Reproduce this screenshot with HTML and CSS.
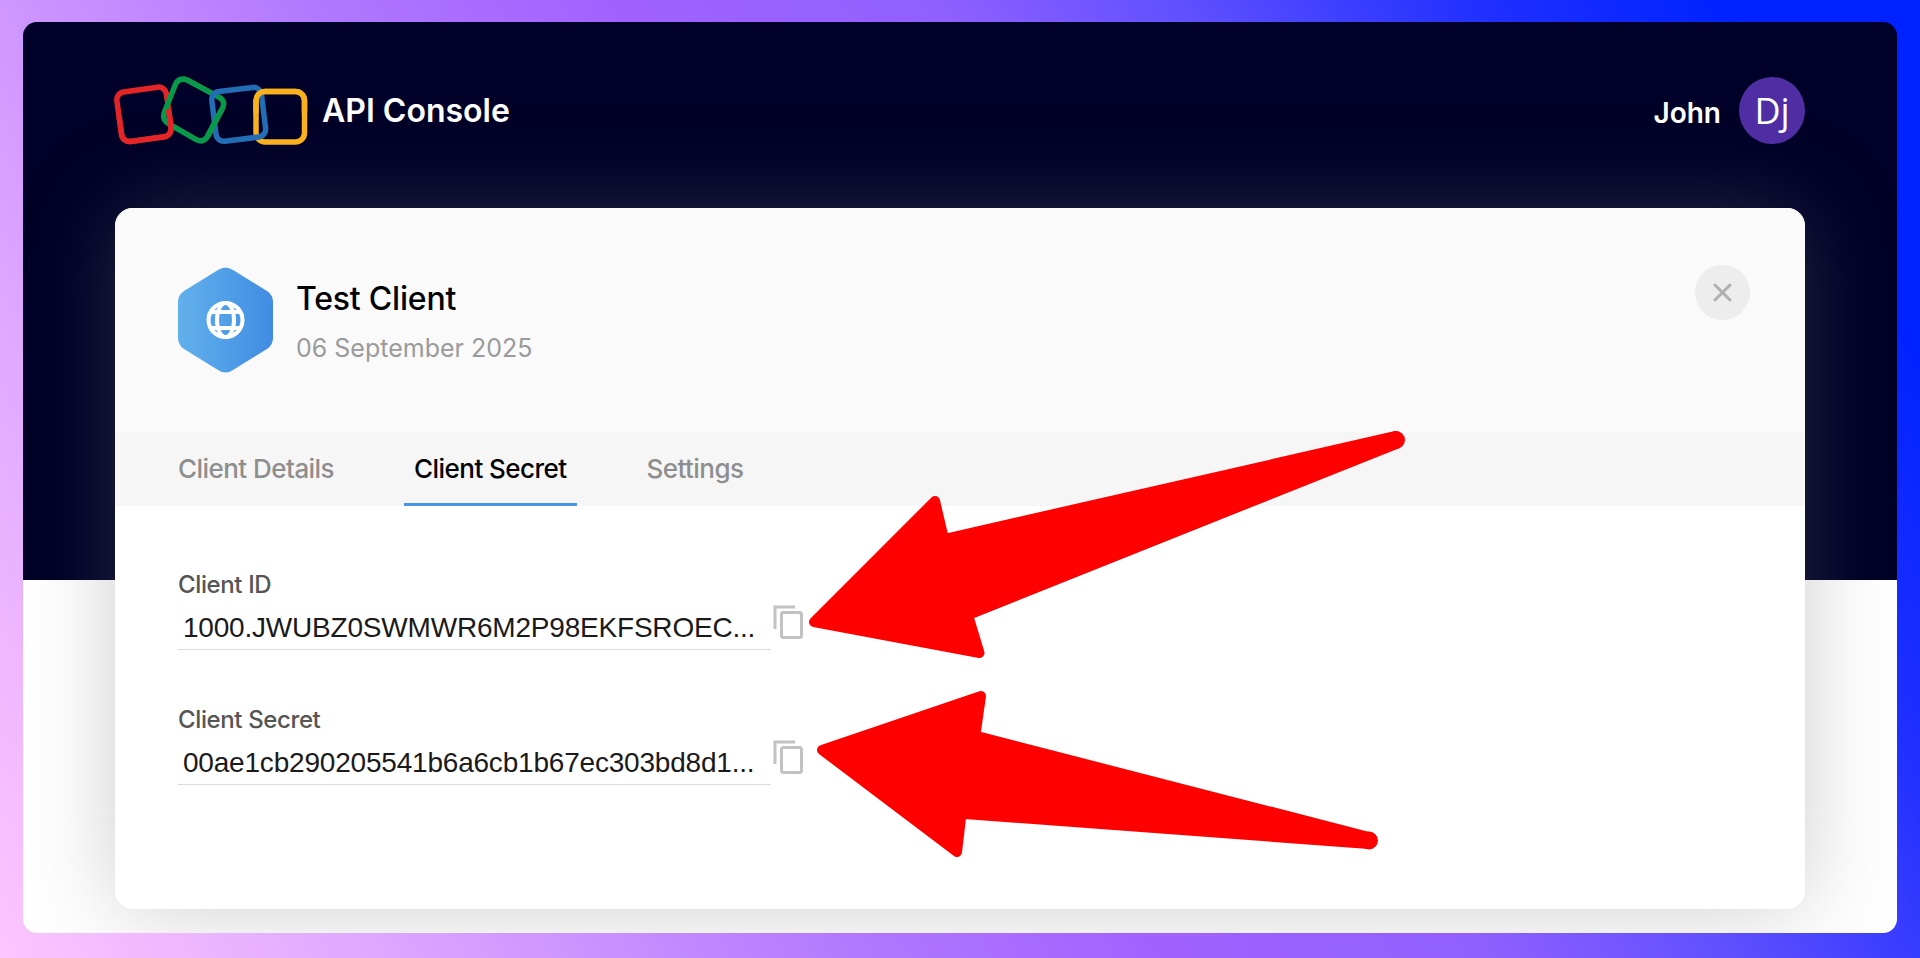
FILE: index.html
```html
<!DOCTYPE html>
<html lang="en">
<head>
  <meta charset="UTF-8" />
  <title>API Console</title>
  <link rel="stylesheet" href="styles.css">
</head>
<body>
  <div class="window">
    <header class="topbar">
      <div class="brand">
        <svg class="brand-logo" width="194" height="70" viewBox="0 0 194 70" fill="none" stroke-width="5.5">
          <defs>
            <clipPath id="lowerPart"><rect x="0" y="36" width="194" height="34"/></clipPath>
            <clipPath id="topPart"><rect x="0" y="0" width="194" height="36"/></clipPath>
          </defs>
          <!-- the four squares are interlocked, so parts get drawn twice -->
          <rect x="5" y="12.3" width="50" height="50" rx="8" stroke="#e42527" transform="rotate(-8 30 37.3)"/>
          <path d="M73.3 3 L104.6 20 Q112.4 24 108.2 31.7 L93.8 58.9 Q89.5 66.5 81.9 62.3 L55.2 47.2 Q47.6 43 50.6 34.8 L61.2 8 Q64.4 -0.2 73.3 3Z" stroke="#089949"/>
          <rect x="5" y="12.3" width="50" height="50" rx="8" stroke="#e42527" transform="rotate(-8 30 37.3)" clip-path="url(#lowerPart)"/>
          <rect x="142" y="14.5" width="48.5" height="50.5" rx="9" stroke="#f9b21d"/>
          <rect x="99.7" y="12.3" width="50" height="50" rx="8" stroke="#226db4" transform="rotate(-7 124.7 37.3)"/>
          <path d="M108.2 31.7 L93.8 58.9" stroke="#089949"/>
          <rect x="142" y="14.5" width="48.5" height="50.5" rx="9" stroke="#f9b21d" clip-path="url(#topPart)"/>
        </svg>
        <span class="brand-name">API Console</span>
      </div>
      <div class="user">
        <span class="user-name">John</span>
        <span class="avatar">Dj</span>
      </div>
    </header>

    <main class="card">
      <div class="card-head">
        <div class="client">
          <svg class="client-icon" width="95" height="108" viewBox="0 0 95 108">
            <defs>
              <linearGradient id="hexFill" x1="0" y1="0" x2="1" y2="0">
                <stop offset="0" stop-color="#62b1ec"/>
                <stop offset="1" stop-color="#3f8ce2"/>
              </linearGradient>
            </defs>
            <path d="M40 4 Q47.5 -1 55 4 L89 25 Q95 29 95 36 L95 72 Q95 79 89 83 L55 104 Q47.5 109 40 104 L6 83 Q0 79 0 72 L0 36 Q0 29 6 25 Z" fill="url(#hexFill)"/>
            <g fill="none" stroke="#fff" stroke-width="4">
              <circle cx="47.5" cy="54" r="17"/>
              <ellipse cx="47.5" cy="54" rx="8.5" ry="17"/>
              <path d="M33 46 H62 M33 62 H62"/>
            </g>
          </svg>
          <div class="client-text">
            <div class="client-name">Test Client</div>
            <div class="client-date">06 September 2025</div>
          </div>
        </div>
        <button class="close-btn">
          <svg width="19" height="19" viewBox="0 0 19 19" stroke="#b0b0b0" stroke-width="3" stroke-linecap="round"><path d="M2 2 L17 17 M17 2 L2 17"/></svg>
        </button>
      </div>

      <nav class="tabs">
        <a class="tab">Client Details</a>
        <a class="tab active">Client Secret</a>
        <a class="tab">Settings</a>
      </nav>

      <div class="card-body">
        <div class="field">
          <label class="field-label">Client ID</label>
          <div class="field-row">
            <div class="field-value">1000.JWUBZ0SWMWR6M2P98EKFSROEC...</div>
            <svg class="copy-icon" width="30" height="34" viewBox="0 0 30 34" fill="none" stroke="#c2c2c2" stroke-width="3">
              <path d="M2 24 V2 H22"/>
              <rect x="8.5" y="7.5" width="20" height="25" rx="2"/>
            </svg>
          </div>
        </div>
        <div class="field">
          <label class="field-label">Client Secret</label>
          <div class="field-row">
            <div class="field-value">00ae1cb290205541b6a6cb1b67ec303bd8d1...</div>
            <svg class="copy-icon" width="30" height="34" viewBox="0 0 30 34" fill="none" stroke="#c2c2c2" stroke-width="3">
              <path d="M2 24 V2 H22"/>
              <rect x="8.5" y="7.5" width="20" height="25" rx="2"/>
            </svg>
          </div>
        </div>
      </div>
    </main>
  </div>

  <!-- annotation arrows on top of the screenshot -->
  <svg class="arrows" width="1920" height="958" viewBox="0 0 1920 958" fill="#ff0000" stroke="#ff0000" stroke-width="10" stroke-linejoin="round">
    <polygon points="1396,436 1396,444 968,615 979.5,653 814,622 935,501 944,539"/>
    <circle cx="1396" cy="440" r="4"/>
    <polygon points="1369,837 1369,844 961.5,813.7 957,852 822,750 981,696 975.3,735.7"/>
    <circle cx="1369" cy="840.5" r="4"/>
  </svg>
</body>
</html>
```

FILE: styles.css
```css
/* Base */
body {
  margin: 0;
  padding: 22px 23px 25px;
  box-sizing: border-box;
  height: 958px;
  overflow: hidden;
  font-family: Inter, "Noto Sans", Arial, sans-serif;
  background: linear-gradient(60deg, #fcc6ff 0%, #e0a8ff 15%, #b078ff 35%, #a062ff 47%, #9060ff 60%, #6050ff 70%, #2030ff 82%, #0022ff 92%);
}

/* Window */
.window {
  height: 911px;
  border-radius: 14px;
  overflow: hidden;
  background: linear-gradient(#000028 558px, #ffffff 558px);
  padding: 0 92px;
}

/* Top bar */
.topbar {
  height: 186px;
  padding-top: 55px;
  box-sizing: border-box;
  display: flex;
  justify-content: space-between;
  align-items: flex-start;
}

.brand {
  display: flex;
  align-items: center;
  gap: 14px;
  margin-left: -1px;
}

.brand-logo {
  overflow: visible;
}

.brand-name {
  margin-top: -4px;
  font-size: 32px;
  font-weight: 600;
  color: #ffffff;
}

.user {
  display: flex;
  align-items: center;
  gap: 18px;
}

.user-name {
  margin-top: 5px;
  font-size: 28px;
  font-weight: 600;
  color: #ffffff;
}

.avatar {
  width: 66px;
  height: 67px;
  border-radius: 50%;
  background: #4f2ea3;
  color: #fff;
  font-family: "Open Sans", sans-serif;
  font-size: 36px;
  display: flex;
  align-items: center;
  justify-content: center;
}

/* Card */
.card {
  height: 701px;
  background: #fff;
  border-radius: 18px;
  box-shadow: 0 0 90px rgba(110, 110, 110, 0.34);
}

.card-head {
  height: 224px;
  box-sizing: border-box;
  padding: 57px 55px 0 63px;
  background: #fafafa;
  border-radius: 18px 18px 0 0;
  display: flex;
  justify-content: space-between;
  align-items: flex-start;
}

.client {
  display: flex;
  gap: 23px;
  align-items: flex-start;
  margin-top: 1px;
}

.client-name {
  font-size: 32px;
  font-weight: 500;
  line-height: 40px;
  margin-top: 13px;
  letter-spacing: -0.2px;
  color: #000;
}

.client-date {
  font-size: 25px;
  line-height: 30px;
  margin-top: 14px;
  color: #9a9a9a;
}

.close-btn {
  width: 55px;
  height: 55px;
  padding: 0;
  border: none;
  border-radius: 50%;
  background: #ededed;
  display: flex;
  align-items: center;
  justify-content: center;
}

/* Tabs */
.tabs {
  height: 74px;
  box-sizing: border-box;
  background: #f6f6f6;
  padding-left: 53px;
  display: flex;
  gap: 60px;
}

.tab {
  padding: 0 10px;
  font-size: 26px;
  font-weight: 500;
  letter-spacing: -0.55px;
  line-height: 73px;
  height: 71px;
  color: #8e8e8e;
  border-bottom: 3px solid transparent;
}

.tab.active {
  color: #000;
  border-bottom-color: #4a94e4;
}

/* Fields */
.card-body {
  padding: 64px 0 0 63px;
}

.field {
  width: 628px;
  margin-bottom: 55px;
}

.field-label {
  display: block;
  font-size: 24px;
  font-weight: 500;
  letter-spacing: -0.38px;
  line-height: 30px;
  color: #555;
}

.field-row {
  display: flex;
  align-items: flex-end;
  margin-top: 5px;
}

.field-value {
  width: 593px;
  height: 45px;
  padding-left: 5px;
  box-sizing: border-box;
  font-family: "Liberation Sans", Arial, sans-serif;
  font-size: 28px;
  letter-spacing: -0.2px;
  line-height: 45px;
  color: #1a1a1a;
  white-space: nowrap;
  border-bottom: 1px solid #dcdcdc;
}

.copy-icon {
  margin: 0 0 11px 2px;
}

/* Annotation overlay */
.arrows {
  position: absolute;
  left: 0;
  top: 0;
}
```
